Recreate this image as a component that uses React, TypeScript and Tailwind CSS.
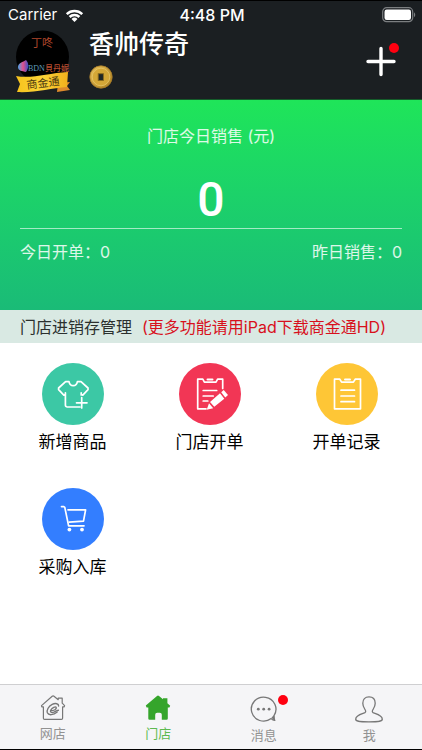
import type { ReactNode } from 'react';

function WifiIcon() {
  return (
    <svg className="w-[19px] h-[13px]" viewBox="0 0 18 13" aria-hidden="true">
      <path d="M0.4 4.2a12.4 12.4 0 0 1 17.2 0l-1.7 1.8a9.9 9.9 0 0 0-13.8 0z" fill="#fff" />
      <path d="M3.2 7.1a8.3 8.3 0 0 1 11.6 0l-1.8 1.8a5.8 5.8 0 0 0-8 0z" fill="#fff" />
      <path d="M6 10a4.3 4.3 0 0 1 6 0l-3 3z" fill="#fff" />
    </svg>
  );
}

function BatteryIcon() {
  return (
    <svg className="w-[34px] h-[16px]" viewBox="0 0 34 16" aria-hidden="true">
      <rect x="0.7" y="0.7" width="30" height="14" rx="4" fill="none" stroke="#7b7e80" strokeWidth="1.2" />
      <rect x="2.5" y="2.5" width="26.5" height="10.4" rx="2.2" fill="#fff" />
      <path d="M32 5.4c1.6.6 1.6 4 0 4.6z" fill="#7b7e80" />
    </svg>
  );
}

function Avatar() {
  return (
    <svg className="w-[58px] h-[66px] shrink-0" viewBox="0 0 58 66" role="img" aria-label="丁咚">
      <defs>
        <linearGradient id="ribbon" x1="0" x2="1">
          <stop offset="0" stopColor="#f6c31c" />
          <stop offset="0.5" stopColor="#fbd338" />
          <stop offset="1" stopColor="#f2b01c" />
        </linearGradient>
        <linearGradient id="brand" x1="0" x2="1">
          <stop offset="0" stopColor="#4ea4e8" />
          <stop offset="0.5" stopColor="#e0508c" />
          <stop offset="1" stopColor="#3a4fc4" />
        </linearGradient>
      </defs>
      <circle cx="28.5" cy="28" r="26.5" fill="#000" />
      <text x="28" y="18" textAnchor="middle" fontSize="11" fill="#b0472c">丁咚</text>
      <path d="M4 38c0-4 5-5 8-7 3 3 3 8 0 12-4-1-8-1-8-5z" fill="url(#brand)" />
      <text x="14" y="42" fontSize="8" fill="#5d9db8" className="font-['Liberation_Serif']">BDN</text>
      <text x="31" y="42" fontSize="8" fontWeight="500" fill="#b54c30">貝丹妮</text>
      <path d="M44 54l12-1-3 4 3 4-13 2z" fill="#dd8a2c" />
      <path d="M2 47c16 3 32-3 52-4l-1 15c-16 1-32 6-50 5l3-8z" fill="url(#ribbon)" />
      <text x="29" y="58" textAnchor="middle" fontSize="11" fill="#4c3a10" transform="rotate(-7 29 54)">商金通</text>
    </svg>
  );
}

function CoinIcon() {
  return (
    <svg className="w-6 h-6" viewBox="0 0 24 24" aria-hidden="true">
      <defs>
        <linearGradient id="coin" x1="0" y1="0" x2="1" y2="1">
          <stop offset="0" stopColor="#e9c25c" />
          <stop offset="1" stopColor="#a97c1b" />
        </linearGradient>
      </defs>
      <circle cx="12" cy="12" r="11.2" fill="url(#coin)" stroke="#a67a28" strokeWidth="0.8" />
      <circle cx="12" cy="12" r="8.8" fill="#d4a737" stroke="#e9c768" strokeWidth="0.8" />
      <rect x="9.2" y="8.7" width="5.2" height="6.8" fill="#1f2626" stroke="#8a6a1c" strokeWidth="0.9" />
    </svg>
  );
}

function ShirtIcon() {
  return (
    <svg className="w-9 h-9" viewBox="0 0 36 36" fill="none" stroke="#fff" strokeWidth="1.7" strokeLinecap="round" strokeLinejoin="round" aria-hidden="true">
      <path d="M25 31H12.2a1.8 1.8 0 0 1-1.8-1.8V16.8M10.4 18.5l-1.6.6-5.2-5.4V12l7-6.4H14c1 5.4 7.4 5.4 8.4 0H26l7 6.4v1.7l-5.2 5.4-1.6-.6v-1.7M26.2 17v2" />
      <path d="M26.7 21.5v10.5M21.5 26.8h10.5" />
    </svg>
  );
}

function ClipboardIcon() {
  return (
    <svg className="w-9 h-9" viewBox="0 0 36 36" fill="none" stroke="#fff" strokeWidth="1.7" strokeLinecap="round" strokeLinejoin="round" aria-hidden="true">
      <path d="M10.8 3.2H5.5v29.6h26V3.2h-5.3l-1.8 2.9H12.6z" />
      <path d="M16 3.4h5" strokeWidth="2" />
      <path d="M12 14.2h13.5M12 20h13.5M12 25.7h13.5" />
    </svg>
  );
}

function EditIcon() {
  return (
    <svg className="w-9 h-9" viewBox="0 0 36 36" fill="none" stroke="#fff" strokeWidth="1.7" strokeLinecap="round" strokeLinejoin="round" aria-hidden="true">
      <path d="M14 32.8H5.7V3.2h5.1l1.6 2.9h11.6l1.6-2.9h5.1V12.5" />
      <path d="M15.5 3.4h5" strokeWidth="2" />
      <path d="M11.2 14.5h13.5M11.2 20h10M11.2 25h4.6" />
      <path d="M14.7 33.7l2.3-6.4 4.2 4.9zM18 26l10-8.7 4.3 5.4-10 8z" fill="#fff" stroke="none" />
      <path d="M29.2 16.2l2.5-2.2 4.3 4.9-2.7 2.5z" fill="#fff" stroke="none" />
    </svg>
  );
}

function CartIcon() {
  return (
    <svg className="w-9 h-9" viewBox="0 0 36 36" fill="none" stroke="#fff" strokeWidth="1.7" strokeLinecap="round" strokeLinejoin="round" aria-hidden="true">
      <path d="M6.5 5.6h2.3l1 .8 3.8 18.4H29" />
      <path d="M13 8.8h17.6L28.5 20.2l-14.4 1" />
      <circle cx="14.4" cy="28.6" r="1.9" fill="#fff" stroke="none" />
      <circle cx="27" cy="28.6" r="1.9" fill="#fff" stroke="none" />
    </svg>
  );
}

function WebShopIcon() {
  return (
    <svg className="w-7 h-7" viewBox="0 0 28 28" fill="none" stroke="#777" strokeWidth="1.2" strokeLinecap="round" strokeLinejoin="round" aria-hidden="true">
      <path d="M2.5 12.6L13.2 3.2q.9-.7 1.8 0l4.2 3.5V5.2h4v5l2.4 2.4-.4 1.2h-1.6v11.4q0 1.2-1.2 1.2H5.6q-1.2 0-1.2-1.2V13.8H2.8z" />
      <path d="M11.6 17.8c3.6 0 6.2-1.6 5.6-3.4-.7-1.4-4 .2-5.4 2.6-1 2 .6 3.2 3 2.2 1.8-.8 2.6-1.8 4.6-2" strokeWidth="1.4" />
      <path d="M19.6 13c.2-2.4-3.2-3.2-6.4-1.6-3.6 1.8-5.8 5.6-4.8 8.4 1.2 2.8 6 2.4 9.8-.8" strokeWidth="1.4" />
    </svg>
  );
}

function StoreIcon() {
  return (
    <svg className="w-7 h-7" viewBox="0 0 28 28" aria-hidden="true">
      <path d="M1.8 12.6L13 3q1-.8 2 0l4 3.2V5.2h4.4v5l2.8 2.6-.8 1.6h-1.6v11q0 1.3-1.3 1.3h-4.7v-5q0-2-2-2h-2.6q-2 0-2 2v5H5.6q-1.3 0-1.3-1.3v-11H2.6z" fill="#35a52b" />
    </svg>
  );
}

function MessageIcon() {
  return (
    <svg className="w-7 h-7" viewBox="0 0 28 28" fill="none" stroke="#777" strokeWidth="1.3" strokeLinecap="round" strokeLinejoin="round" aria-hidden="true">
      <path d="M21.2 23.6A12.3 12 0 1 1 24 20.6q-.4 2.8.8 4.8-2 0-3.6-1.8z" />
      <path d="M22.2 22.6l1.6-1.5.4 3.5z" fill="#777" />
      <g fill="#777" stroke="none">
        <circle cx="8.3" cy="14.2" r="1.4" />
        <circle cx="13.7" cy="14.2" r="1.4" />
        <circle cx="19.1" cy="14.2" r="1.4" />
      </g>
    </svg>
  );
}

function PersonIcon() {
  return (
    <svg className="w-7 h-7" viewBox="0 0 28 28" fill="none" stroke="#777" strokeWidth="1.3" strokeLinejoin="round" aria-hidden="true">
      <path d="M14 1.8c4 0 6.2 2.6 6.2 6.4 0 3.4-1.4 5-2.5 6.8-.9 1.6-.2 2.6 1.6 3.2 3.6 1.2 8 2.4 8 6.1 0 2-3 2.5-13.3 2.5S.7 26.3.7 24.3c0-3.7 4.4-4.9 8-6.1 1.8-.6 2.5-1.6 1.6-3.2-1.1-1.8-2.5-3.4-2.5-6.8 0-3.8 2.2-6.4 6.2-6.4z" />
    </svg>
  );
}

type Action = { label: string; color: string; icon: ReactNode };

const actions: Action[] = [
  { label: '新增商品', color: 'bg-[#3cc8a5]', icon: <ShirtIcon /> },
  { label: '门店开单', color: 'bg-[#f23655]', icon: <EditIcon /> },
  { label: '开单记录', color: 'bg-[#fec636]', icon: <ClipboardIcon /> },
  { label: '采购入库', color: 'bg-[#337eff]', icon: <CartIcon /> },
];

type Tab = { label: string; icon: ReactNode; active?: boolean; badge?: boolean; low?: boolean };

const tabs: Tab[] = [
  { label: '网店', icon: <WebShopIcon /> },
  { label: '门店', icon: <StoreIcon />, active: true },
  { label: '消息', icon: <MessageIcon />, badge: true, low: true },
  { label: '我', icon: <PersonIcon />, low: true },
];

export default function App() {
  return (
    <div className="min-h-screen flex flex-col bg-white text-black font-['Inter','Noto_Sans_CJK_SC',sans-serif]">
      <header className="bg-[#1b1f22] text-white border-t border-black border-b border-b-[#145c2a]">
        {/* Status bar */}
        <div className="grid grid-cols-3 items-center h-7 pl-2 pr-[6px] text-base leading-7">
          <div className="flex items-center gap-2">
            <span className="text-[15px]">Carrier</span>
            <WifiIcon />
          </div>
          <span className="text-center font-medium whitespace-nowrap">4:48 PM</span>
          <div className="flex justify-end">
            <BatteryIcon />
          </div>
        </div>

        {/* Shop title */}
        <div className="flex items-start h-[70px] pl-[14px] pr-6">
          <Avatar />
          <div className="ml-[17px] flex-1">
            <h1 className="text-[25px] leading-[30px] font-medium">香帅传奇</h1>
            <div className="mt-[6px]">
              <CoinIcon />
            </div>
          </div>
          <button type="button" aria-label="添加" className="relative mt-4 w-8 h-8 flex items-center justify-center">
            <svg className="w-8 h-8" viewBox="0 0 32 32" stroke="#fff" strokeWidth="3.4" strokeLinecap="round" aria-hidden="true">
              <path d="M15 3.5v26M2 16.5h26" />
            </svg>
            <span className="absolute -top-[2px] -right-px w-[10px] h-[10px] rounded-full bg-[#ff0010]" />
          </button>
        </div>
      </header>

      {/* Today's sales */}
      <section className="h-[210px] px-5 bg-linear-to-b from-[#1fe559] to-[#1abb77] text-white/85 text-base">
        <h2 className="pt-6 text-center leading-6">门店今日销售 (元)</h2>
        <p className="mt-6 h-14 text-center text-5xl leading-14 font-medium text-white font-['Roboto',sans-serif]">0</p>
        <div className="flex justify-between border-t border-white/60 pt-[11px] leading-6">
          <span>今日开单：0</span>
          <span>昨日销售：0</span>
        </div>
      </section>

      <div className="h-[33px] flex items-center gap-[10px] px-5 bg-[#d9e9e3] text-base whitespace-nowrap text-[#2b302e]">
        <span>门店进销存管理</span>
        <span className="text-[#d8101c]">(更多功能请用iPad下载商金通HD)</span>
      </div>

      {/* Actions */}
      <main className="flex-1">
        <div className="grid grid-cols-3 gap-y-[33px] pt-5 pl-1 pr-[7px]">
          {actions.map((action) => (
            <button key={action.label} type="button" className="flex flex-col items-center gap-1">
              <span className={`w-[62px] h-[62px] rounded-full flex items-center justify-center ${action.color}`}>
                {action.icon}
              </span>
              <span className="text-[17px] leading-[26px]">{action.label}</span>
            </button>
          ))}
        </div>
      </main>

      {/* Bottom tabs */}
      <nav className="h-[66px] grid grid-cols-4 bg-[#f5f5f7] border-t border-[#cfcfd1] border-b border-b-black">
        {tabs.map((tab) => (
          <a
            key={tab.label}
            href="#"
            className={`flex flex-col items-center text-[13px] leading-6 ${tab.low ? 'pt-[10px]' : 'pt-2'} ${tab.active ? 'text-[#5dba50]' : 'text-[#929292]'}`}
          >
            <span className="relative h-7">
              {tab.icon}
              {tab.badge && <span className="absolute top-0 -right-[10px] w-[10px] h-[10px] rounded-full bg-[#ff0010]" />}
            </span>
            <span>{tab.label}</span>
          </a>
        ))}
      </nav>
    </div>
  );
}
